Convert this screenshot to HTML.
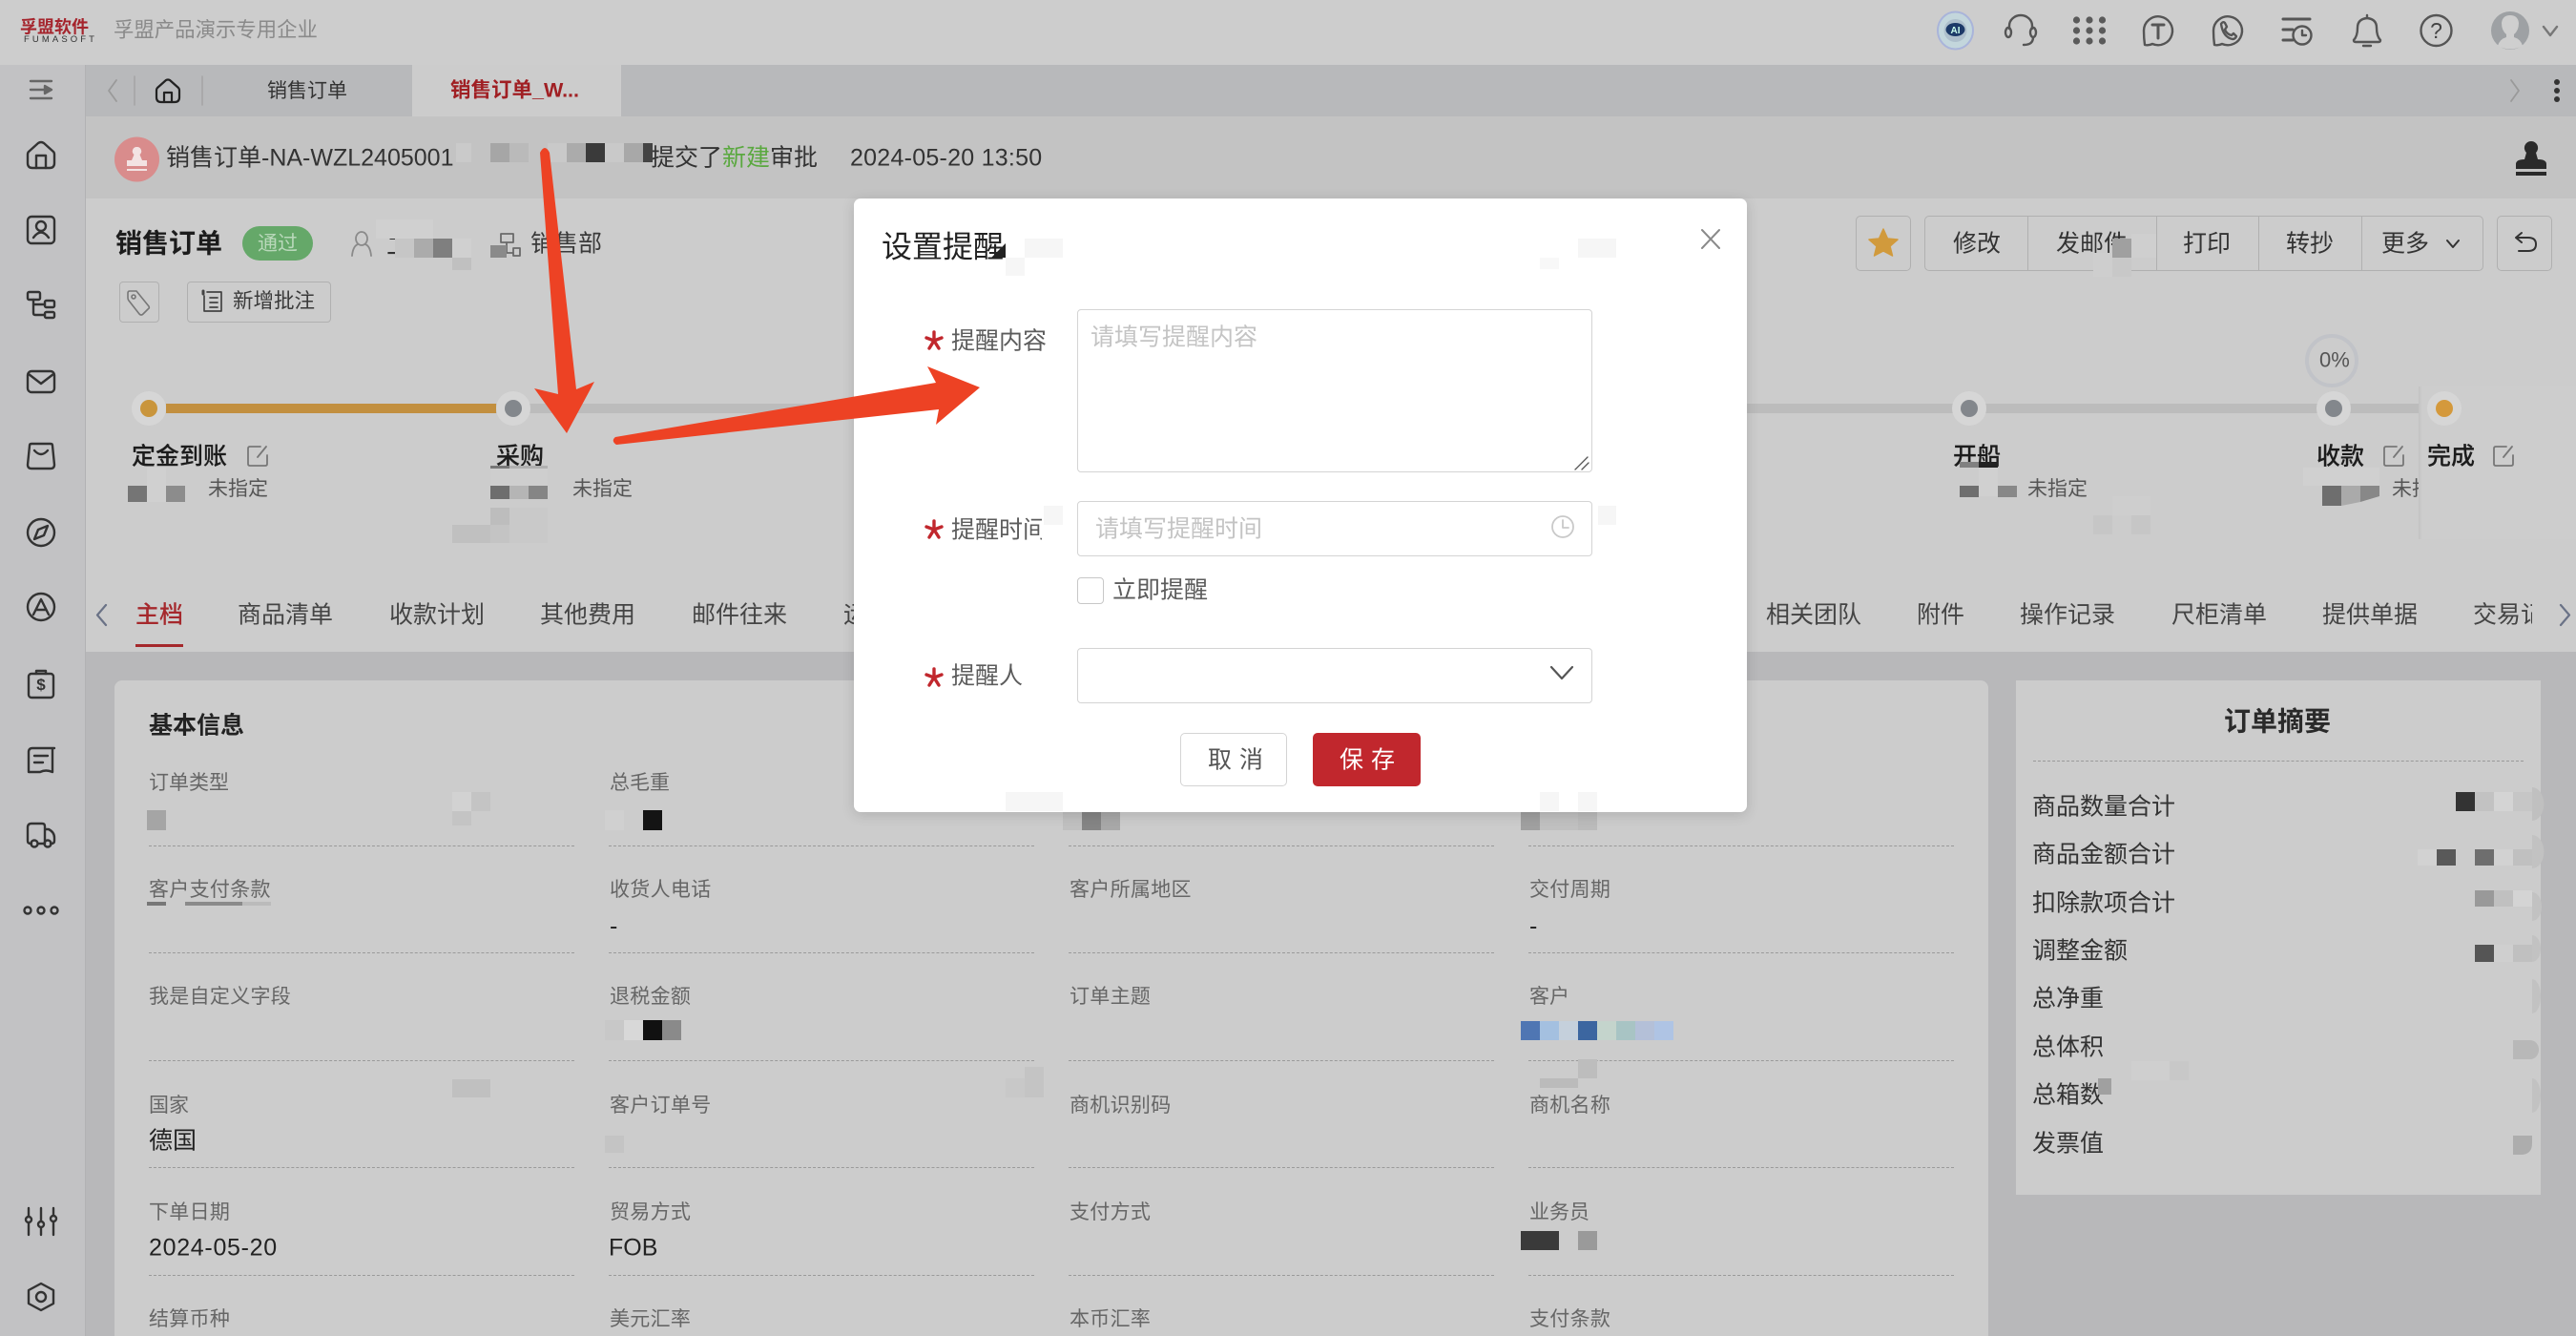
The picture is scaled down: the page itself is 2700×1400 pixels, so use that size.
<!DOCTYPE html>
<html lang="zh-CN"><head><meta charset="utf-8"><title>销售订单</title>
<style>
html,body{margin:0;padding:0;width:2700px;height:1400px;overflow:hidden;background:#b8b8ba;font-family:"Liberation Sans","Noto Sans CJK SC",sans-serif;}
#r{position:relative;width:2700px;height:1400px;overflow:hidden}
div.b{position:absolute;box-sizing:border-box}
.t{position:absolute;white-space:nowrap;transform:translateY(calc(-50% + 1.5px));line-height:1.2;font-size:25px;color:#333}
.l{font-size:21px;color:#666}
.v{font-size:25px;color:#222}
.u{font-size:21px;color:#555}
.s{font-weight:500;color:#1c1c1c;-webkit-text-stroke:.15px #1c1c1c}
.d{position:absolute;height:0;border-top:1px dashed #9a9a9a}
svg{position:absolute;left:0;top:0}
</style></head><body><div id="r">
<!-- backgrounds -->
<div class="b" style="left:0;top:0;width:2700px;height:68px;background:#cdcdcd"></div>
<div class="b" style="left:0;top:68px;width:90px;height:1332px;background:#c2c2c4;border-right:1px solid #b2b2b4"></div>
<div class="b" style="left:90px;top:68px;width:2610px;height:54px;background:#b8b9bb"></div>
<div class="b" style="left:432px;top:68px;width:219px;height:54px;background:#cccccc"></div>
<div class="b" style="left:90px;top:122px;width:2610px;height:86px;background:#c3c3c3"></div>
<div class="b" style="left:90px;top:208px;width:2610px;height:475px;background:#cccccc"></div>
<div class="b" style="left:2535px;top:405px;width:165px;height:160px;background:linear-gradient(90deg,#c2c2c2,#cdcdcd 4px)"></div>
<div class="b" style="left:120px;top:713px;width:1964px;height:687px;background:#cccccc;border-radius:8px 8px 0 0"></div>
<div class="b" style="left:2113px;top:713px;width:550px;height:539px;background:#cccccc"></div>

<!-- header -->
<span class="t" style="left:21px;top:28px;font-size:18px;font-weight:700;color:#a5252d">孚盟软件</span>
<span class="t" style="left:25px;top:40px;font-size:9.5px;letter-spacing:3.1px;color:#333">FUMASOFT</span>
<span class="t" style="left:119px;top:31px;font-size:21.4px;color:#8a8a8a">孚盟产品演示专用企业</span>

<!-- tab bar -->
<span class="t" style="left:280px;top:94px;font-size:21px;color:#333">销售订单</span>
<span class="t" style="left:472px;top:94px;font-size:21.5px;font-weight:700;color:#a01f23">销售订单_W...</span>

<!-- notice bar -->
<span class="t" style="left:174px;top:164px">销售订单-NA-WZL2405001</span>
<span class="t" style="left:682px;top:164px">提交了<span style="color:#5aa83f">新建</span>审批</span>
<span class="t" style="left:891px;top:164px;letter-spacing:.25px">2024-05-20 13:50</span>

<!-- title row -->
<span class="t" style="left:121px;top:254px;font-size:28px;font-weight:700;color:#1c1c1c">销售订单</span>
<div class="b" style="left:254px;top:237px;width:74px;height:36px;border-radius:18px;background:#65a869"></div>
<span class="t" style="left:270px;top:254px;font-size:21px;color:#b9d8ba">通过</span>
<span class="t" style="left:405px;top:257px;color:#333">二</span>
<span class="t" style="left:556px;top:254px;color:#3a3a3a">销售部</span>
<div class="b" style="left:125px;top:295px;width:42px;height:43px;border:1px solid #b0b0b0;border-radius:4px"></div>
<div class="b" style="left:196px;top:295px;width:151px;height:43px;border:1px solid #b0b0b0;border-radius:4px"></div>
<span class="t" style="left:244px;top:315px;font-size:21.5px;color:#3a3a3a">新增批注</span>

<!-- toolbar -->
<div class="b" style="left:1945px;top:226px;width:58px;height:58px;border:1px solid #b0b0b0;border-radius:5px"></div>
<div class="b" style="left:2017px;top:226px;width:586px;height:58px;border:1px solid #b0b0b0;border-radius:5px"></div>
<div class="b" style="left:2125px;top:226px;width:1px;height:58px;background:#b0b0b0"></div>
<div class="b" style="left:2260px;top:226px;width:1px;height:58px;background:#b0b0b0"></div>
<div class="b" style="left:2367px;top:226px;width:1px;height:58px;background:#b0b0b0"></div>
<div class="b" style="left:2475px;top:226px;width:1px;height:58px;background:#b0b0b0"></div>
<div class="b" style="left:2617px;top:226px;width:58px;height:58px;border:1px solid #b0b0b0;border-radius:5px"></div>
<span class="t" style="left:2047px;top:254px">修改</span>
<span class="t" style="left:2155px;top:254px">发邮件</span>
<span class="t" style="left:2288px;top:254px">打印</span>
<span class="t" style="left:2396px;top:254px">转抄</span>
<span class="t" style="left:2496px;top:254px">更多</span>

<!-- progress -->
<div class="b" style="left:520px;top:423px;width:2015px;height:10px;background:#bcbcbc"></div>
<div class="b" style="left:174px;top:423px;width:346px;height:10px;background:#c28f3f"></div>
<span class="t s" style="left:138px;top:477px">定金到账</span>
<span class="t u" style="left:218px;top:511px">未指定</span>
<span class="t s" style="left:520px;top:477px">采购</span>
<span class="t u" style="left:600px;top:511px">未指定</span>
<span class="t s" style="left:2047px;top:477px">开船</span>
<span class="t u" style="left:2125px;top:511px">未指定</span>
<span class="t s" style="left:2428px;top:477px">收款</span>
<div class="b" style="left:2507px;top:495px;width:28px;height:34px;overflow:hidden"><span class="t u" style="left:0;top:16px">未指定</span></div>
<span class="t s" style="left:2544px;top:477px">完成</span>
<div class="b" style="left:2416px;top:350px;width:56px;height:56px;border:4px solid #c1c3c8;border-radius:50%"></div>
<span class="t" style="left:2431px;top:376px;font-size:22px;color:#555">0%</span>

<!-- tabs -->
<span class="t" style="left:142px;top:643px;color:#a5282c;font-weight:500">主档</span>
<div class="b" style="left:142px;top:675px;width:50px;height:3px;background:#a5282c"></div>
<span class="t" style="left:249px;top:643px;color:#444">商品清单</span>
<span class="t" style="left:408px;top:643px;color:#444">收款计划</span>
<span class="t" style="left:566px;top:643px;color:#444">其他费用</span>
<span class="t" style="left:725px;top:643px;color:#444">邮件往来</span>
<span class="t" style="left:884px;top:643px;color:#444">运输信息</span>
<span class="t" style="left:1851px;top:643px;color:#444">相关团队</span>
<span class="t" style="left:2009px;top:643px;color:#444">附件</span>
<span class="t" style="left:2117px;top:643px;color:#444">操作记录</span>
<span class="t" style="left:2276px;top:643px;color:#444">尺柜清单</span>
<span class="t" style="left:2434px;top:643px;color:#444">提供单据</span>
<div class="b" style="left:2592px;top:625px;width:62px;height:40px;overflow:hidden"><span class="t" style="left:0;top:18px;color:#444">交易记录</span></div>

<!-- base info -->
<span class="t" style="left:156px;top:759px;font-weight:700;color:#222">基本信息</span>
<span class="t l" style="left:156px;top:819px">订单类型</span>
<span class="t l" style="left:639px;top:819px">总毛重</span>
<span class="t l" style="left:156px;top:931px;letter-spacing:.3px">客户支付条款</span>
<span class="t l" style="left:639px;top:931px;letter-spacing:.3px">收货人电话</span>
<span class="t l" style="left:1121px;top:931px;letter-spacing:.3px">客户所属地区</span>
<span class="t l" style="left:1603px;top:931px;letter-spacing:.3px">交付周期</span>
<span class="t v" style="left:639px;top:969px">-</span>
<span class="t v" style="left:1603px;top:969px">-</span>
<span class="t l" style="left:156px;top:1043px;letter-spacing:.3px">我是自定义字段</span>
<span class="t l" style="left:639px;top:1043px;letter-spacing:.3px">退税金额</span>
<span class="t l" style="left:1121px;top:1043px;letter-spacing:.3px">订单主题</span>
<span class="t l" style="left:1603px;top:1043px">客户</span>
<span class="t l" style="left:156px;top:1157px">国家</span>
<span class="t l" style="left:639px;top:1157px;letter-spacing:.3px">客户订单号</span>
<span class="t l" style="left:1121px;top:1157px;letter-spacing:.3px">商机识别码</span>
<span class="t l" style="left:1603px;top:1157px;letter-spacing:.3px">商机名称</span>
<span class="t v" style="left:156px;top:1194px">德国</span>
<span class="t l" style="left:156px;top:1269px;letter-spacing:.3px">下单日期</span>
<span class="t l" style="left:639px;top:1269px;letter-spacing:.3px">贸易方式</span>
<span class="t l" style="left:1121px;top:1269px;letter-spacing:.3px">支付方式</span>
<span class="t l" style="left:1603px;top:1269px">业务员</span>
<span class="t v" style="left:156px;top:1306px;letter-spacing:.7px">2024-05-20</span>
<span class="t v" style="left:638px;top:1306px;font-size:25px">FOB</span>
<span class="t l" style="left:156px;top:1381px;letter-spacing:.3px">结算币种</span>
<span class="t l" style="left:639px;top:1381px;letter-spacing:.3px">美元汇率</span>
<span class="t l" style="left:1121px;top:1381px;letter-spacing:.3px">本币汇率</span>
<span class="t l" style="left:1603px;top:1381px;letter-spacing:.3px">支付条款</span>
<!-- dashed rows -->
<div class="d" style="left:156px;top:886px;width:446px"></div><div class="d" style="left:638px;top:886px;width:446px"></div><div class="d" style="left:1120px;top:886px;width:446px"></div><div class="d" style="left:1602px;top:886px;width:446px"></div>
<div class="d" style="left:156px;top:998px;width:446px"></div><div class="d" style="left:638px;top:998px;width:446px"></div><div class="d" style="left:1120px;top:998px;width:446px"></div><div class="d" style="left:1602px;top:998px;width:446px"></div>
<div class="d" style="left:156px;top:1111px;width:446px"></div><div class="d" style="left:638px;top:1111px;width:446px"></div><div class="d" style="left:1120px;top:1111px;width:446px"></div><div class="d" style="left:1602px;top:1111px;width:446px"></div>
<div class="d" style="left:156px;top:1223px;width:446px"></div><div class="d" style="left:638px;top:1223px;width:446px"></div><div class="d" style="left:1120px;top:1223px;width:446px"></div><div class="d" style="left:1602px;top:1223px;width:446px"></div>
<div class="d" style="left:156px;top:1336px;width:446px"></div><div class="d" style="left:638px;top:1336px;width:446px"></div><div class="d" style="left:1120px;top:1336px;width:446px"></div><div class="d" style="left:1602px;top:1336px;width:446px"></div>

<!-- summary -->
<span class="t" style="left:2331px;top:755px;font-size:28px;font-weight:700;color:#2a2a2a">订单摘要</span>
<div class="d" style="left:2131px;top:797px;width:514px"></div>
<span class="t" style="left:2130px;top:844px">商品数量合计</span>
<span class="t" style="left:2130px;top:894px">商品金额合计</span>
<span class="t" style="left:2130px;top:945px">扣除款项合计</span>
<span class="t" style="left:2130px;top:995px">调整金额</span>
<span class="t" style="left:2130px;top:1045px">总净重</span>
<span class="t" style="left:2130px;top:1096px">总体积</span>
<span class="t" style="left:2130px;top:1146px">总箱数</span>
<span class="t" style="left:2130px;top:1197px">发票值</span>

<!-- icons and mosaic beneath modal -->
<svg width="2700" height="1400" viewBox="0 0 2700 1400" fill="none" stroke-linecap="round" stroke-linejoin="round">
<!-- sidebar -->
<g stroke="#333" stroke-width="2.4">
<g transform="translate(43,94)" stroke="#666"><path d="M-11,-9H11M-11,0H3M-11,9H11"/><path d="M4,-4L11,0L4,4Z" fill="#666"/></g>
<g transform="translate(43,162)"><path d="M-13,-3L-3,-12Q0,-14 3,-12L13,-3Q14,-2 14,0V9Q14,14 9,14H-9Q-14,14 -14,9V0Q-14,-2 -13,-3Z"/><path d="M-5,14V1H5V14"/></g>
<g transform="translate(43,241)"><rect x="-14" y="-14" width="28" height="28" rx="4"/><circle cx="0" cy="-4" r="5"/><path d="M-8,8Q0,-3 8,8"/></g>
<g transform="translate(43,319)"><rect x="-14" y="-13" width="13" height="8" rx="1.5"/><rect x="4" y="-4" width="10" height="7" rx="1.5"/><rect x="4" y="8" width="10" height="6" rx="1.5"/><path d="M-8,-5V9Q-8,11 -6,11H4M-8,0H4"/></g>
<g transform="translate(43,400)"><rect x="-14" y="-11" width="28" height="22" rx="4"/><path d="M-13,-8L0,2L13,-8"/></g>
<g transform="translate(43,478)"><path d="M-10,-13H10Q12,-13 12,-11L14,9Q14,13 10,13H-10Q-14,13 -14,9L-12,-11Q-12,-13 -10,-13Z"/><path d="M-7,-6Q0,2 7,-6"/></g>
<g transform="translate(43,558)"><circle r="14"/><path d="M7,-7L3,3L-7,7L-3,-3Z"/></g>
<g transform="translate(43,636)"><circle r="14"/><path d="M-8,8L0,-8L8,8M-5,3H5"/></g>
<g transform="translate(43,717)"><rect x="-13" y="-11" width="26" height="25" rx="3"/><path d="M-5,-11V-14H5V-11"/></g>
<text x="43" y="723" font-size="17" font-weight="700" fill="#333" stroke="none" text-anchor="middle" font-family="Liberation Sans">$</text>
<g transform="translate(43,796)"><path d="M14,-12H-9Q-13,-12 -13,-8V13H-1Q5,10 12,13V-12"/><path d="M-7,-4H7M-7,3H2"/></g>
<g transform="translate(43,874)"><path d="M-10,10H-11Q-14,10 -14,7V-7Q-14,-11 -10,-11H1Q4,-11 4,-8V10M-3,10H4M4,-5H8Q14,-2 14,4V7Q14,10 11,10H10"/><circle cx="-7" cy="10" r="3.5"/><circle cx="7" cy="10" r="3.5"/></g>
<g transform="translate(43,954)"><circle cx="-14" r="3.5"/><circle r="3.5"/><circle cx="14" r="3.5"/></g>
<g transform="translate(43,1280)"><path d="M-13,-14V14M0,-14V14M13,-14V14"/><circle cx="-13" cy="-2" r="3" fill="#c2c2c4"/><circle cx="0" cy="3" r="3" fill="#c2c2c4"/><circle cx="13" cy="-3" r="3" fill="#c2c2c4"/></g>
<g transform="translate(43,1359)"><path d="M0,-14L13,-7V7L0,14L-13,7V-7Z"/><circle r="5"/></g>
</g>
<!-- header icons -->
<ellipse cx="2049.5" cy="32" rx="18.5" ry="19.5" fill="#c3d6dc" stroke="#a9b4da" stroke-width="2"/><circle cx="2049.5" cy="32" r="12" fill="#aebfcc"/><ellipse cx="2049.5" cy="31" rx="10" ry="7" fill="#1d3a68"/>
<text x="2049.5" y="35" font-size="10" font-weight="700" fill="#cfe" text-anchor="middle" font-family="Liberation Sans">AI</text>
<g stroke="#555" stroke-width="2.4">
<g transform="translate(2118,32)"><path d="M-12,-2V-5A12,11 0 0 1 12,-5V-2M13,7Q13,15 3,15"/><ellipse cx="-13" cy="2" rx="3" ry="5"/><ellipse cx="13" cy="2" rx="3" ry="5"/></g>
<g transform="translate(2262,32)"><path d="M-15,0A15,15 0 1 1 -6,14Q-10,16 -14,15Q-15,8 -15,0Z"/><path d="M-6,-6H6M0,-6V8" stroke-width="3"/></g>
<g transform="translate(2335,32)"><path d="M-15,0A15,15 0 1 1 -6,14Q-10,16 -14,15Q-15,8 -15,0Z"/><path d="M-7,-7Q-5,-10 -3,-8L-1,-4L-3,-1Q-1,4 4,5L6,3L9,6Q8,9 5,9Q-5,7 -7,-7Z"/></g>
<g transform="translate(2407,32)"><path d="M-14,-12H14" stroke-width="3"/><path d="M-14,-1H-4M-14,10H-4" stroke-width="3"/><circle cx="6" cy="5" r="9.5"/><path d="M6,0V5H10"/></g>
<g transform="translate(2481,32)"><path d="M-14,10Q-10,6 -10,-3Q-10,-12 0,-13Q10,-12 10,-3Q10,6 14,10Q14,12 12,12H-12Q-14,12 -14,10Z"/><path d="M0,-16V-13M-4,16H4"/></g>
<circle cx="2553.5" cy="32" r="16"/>
<path d="M2666,28L2673,37L2680,28" stroke="#777"/>
</g>
<text x="2553.5" y="40" font-size="23" fill="#444" text-anchor="middle" font-family="Liberation Sans">?</text>
<g fill="#5a5a5a"><circle cx="2176.5" cy="21" r="3.6"/><circle cx="2190" cy="21" r="3.6"/><circle cx="2203.5" cy="21" r="3.6"/><circle cx="2176.5" cy="32" r="3.6"/><circle cx="2190" cy="32" r="3.6"/><circle cx="2203.5" cy="32" r="3.6"/><circle cx="2176.5" cy="43" r="3.6"/><circle cx="2190" cy="43" r="3.6"/><circle cx="2203.5" cy="43" r="3.6"/></g>
<circle cx="2631" cy="32" r="20" fill="#9ea1a4"/>
<path d="M2618,48Q2620,41 2627,39V36Q2622,32 2622,24Q2623,16 2631,16Q2639,16 2640,24Q2640,32 2635,36V39Q2642,41 2644,48Q2631,55 2618,48Z" fill="#cfcfcf"/>
<!-- tab bar icons -->
<path d="M122,84L114,95L122,106" stroke="#9a9a9a" stroke-width="1.8"/>
<path d="M141,80V110M212,80V110" stroke="#a4a4a4" stroke-width="1.5"/>
<g transform="translate(176,95)" stroke="#222" stroke-width="2.2"><path d="M-11,-3L-2,-11Q0,-12 2,-11L11,-3Q12,-2 12,0V7Q12,12 7,12H-7Q-12,12 -12,7V0Q-12,-2 -11,-3Z"/><path d="M-4,12V2H4V12"/></g>
<path d="M2632,84L2640,95L2632,106" stroke="#9a9a9a" stroke-width="1.8"/>
<g fill="#333"><circle cx="2680" cy="86" r="3"/><circle cx="2680" cy="95" r="3"/><circle cx="2680" cy="104" r="3"/></g>
<!-- notice icons -->
<ellipse cx="143.5" cy="167" rx="23.5" ry="23.5" fill="#d98c8c"/>
<path d="M143.5,154a4.5,4.5 0 0 1 3,8L149,168H154V174H133V168H138L140.5,162A4.5,4.5 0 0 1 143.5,154ZM133,177H154V179H133Z" fill="#f3e3e3"/>
<path d="M2653,148a7,7 0 0 1 5,12L2660,167Q2669,167 2669,172V177H2637V172Q2637,167 2646,167L2648,160A7,7 0 0 1 2653,148ZM2637,180H2669V184H2637Z" fill="#2a2a2a"/>
<!-- title row icons -->
<g stroke="#8a8a8a" stroke-width="1.8"><ellipse cx="379" cy="250" rx="6" ry="7"/><path d="M369,268Q370,258 375,256M389,268Q388,258 383,256"/></g>
<g stroke="#6a6a6a" stroke-width="1.8"><rect x="525" y="245" width="13" height="9"/><path d="M531,254V265H538"/><rect x="538" y="260" width="7" height="8"/></g>
<g transform="translate(146,316)" stroke="#777" stroke-width="1.6"><path d="M-12,-9Q-12,-11 -10,-11L-3,-11L10,5Q11,7 9,8L4,13Q2,15 0,13L-11,-1Q-12,-2 -12,-4Z"/><circle cx="-6" cy="-5" r="2"/></g>
<g transform="translate(223,316)" stroke="#444" stroke-width="1.7"><path d="M-6,-10H9V10H-9V-6M-3,-4H5M-3,1H5M-3,6H5"/><path d="M-10,-11V-8" stroke-width="3"/></g>
<!-- toolbar icons -->
<path d="M1974,240L1978.5,250L1989,251L1981,258L1983.5,268L1974,263L1964.5,268L1967,258L1959,251L1969.5,250Z" fill="#d19a3c" stroke="#d19a3c" stroke-width="1.5"/>
<path d="M2565,252L2571,259L2577,252" stroke="#333" stroke-width="2"/>
<g stroke="#333" stroke-width="2"><path d="M2643,244L2637,249L2643,254M2637,249H2650Q2658,249 2658,256Q2658,263 2650,263H2640"/></g>
<!-- progress nodes -->
<g fill="#d6d6d6"><circle cx="156" cy="428" r="18"/><circle cx="538" cy="428" r="18"/><circle cx="2064" cy="428" r="18"/><circle cx="2446" cy="428" r="18"/><circle cx="2562" cy="428" r="18"/></g>
<circle cx="156" cy="428" r="9" fill="#c9953c"/><circle cx="538" cy="428" r="9" fill="#83878c"/><circle cx="2064" cy="428" r="9" fill="#83878c"/><circle cx="2446" cy="428" r="9" fill="#83878c"/><circle cx="2562" cy="428" r="9" fill="#d4993c"/>
<!-- edit icons -->
<g stroke="#777" stroke-width="1.8">
<g transform="translate(270,478)"><path d="M3,-10H-8Q-10,-10 -10,-8V8Q-10,10 -8,10H8Q10,10 10,8V-1M0,1L9,-10"/></g>
<g transform="translate(2509,478)"><path d="M3,-10H-8Q-10,-10 -10,-8V8Q-10,10 -8,10H8Q10,10 10,8V-1M0,1L9,-10"/></g>
<g transform="translate(2624,478)"><path d="M3,-10H-8Q-10,-10 -10,-8V8Q-10,10 -8,10H8Q10,10 10,8V-1M0,1L9,-10"/></g>
</g>
<!-- tab chevrons -->
<path d="M111,634L102,644.5L111,655" stroke="#6a7286" stroke-width="2.2"/>
<path d="M2684,634L2693,644.5L2684,655" stroke="#6a7286" stroke-width="2.2"/>
<!-- mosaic -->
<g stroke="none">
<!-- notice -->
<rect x="478" y="150" width="16" height="20" fill="#cacaca"/><rect x="514" y="150" width="20" height="20" fill="#a6a6a6"/><rect x="534" y="150" width="20" height="20" fill="#bababa"/><rect x="574" y="150" width="20" height="20" fill="#c9c9c9"/><rect x="594" y="150" width="20" height="20" fill="#ababab"/><rect x="614" y="150" width="20" height="20" fill="#3a3a3a"/><rect x="634" y="150" width="20" height="20" fill="#c9c9c9"/><rect x="654" y="150" width="20" height="20" fill="#a8a8a8"/><rect x="674" y="150" width="10" height="20" fill="#444"/>
<!-- title -->
<rect x="394" y="230" width="60" height="20" fill="#d0d0d0"/><rect x="414" y="250" width="20" height="20" fill="#c6c6c6"/><rect x="434" y="250" width="20" height="20" fill="#ababab"/><rect x="454" y="250" width="20" height="20" fill="#7f7f7f"/><rect x="474" y="250" width="20" height="20" fill="#d0d0d0"/><rect x="474" y="270" width="20" height="13" fill="#c0c0c0"/><rect x="514" y="257" width="17" height="13" fill="#8a8a8a"/>
<!-- toolbar -->
<rect x="2194" y="265" width="20" height="25" fill="#cecece"/><rect x="2214" y="250" width="20" height="20" fill="#a0a0a0"/><rect x="2214" y="270" width="20" height="20" fill="#c8c8c8"/><rect x="2234" y="245" width="26" height="25" fill="#cfcfcf"/>
<!-- steps -->
<rect x="134" y="509" width="20" height="17" fill="#757575"/><rect x="154" y="490" width="20" height="36" fill="#d0d0d0"/><rect x="174" y="509" width="20" height="17" fill="#8c8c8c"/>
<rect x="514" y="488" width="20" height="3" fill="#777"/><rect x="534" y="488" width="40" height="3" fill="#b0b0b0"/><rect x="514" y="491" width="60" height="18" fill="#cecece"/><rect x="514" y="509" width="20" height="14" fill="#6e6e6e"/><rect x="534" y="509" width="20" height="14" fill="#b5b5b5"/><rect x="554" y="509" width="20" height="14" fill="#858585"/>
<rect x="474" y="550" width="40" height="19" fill="#c0c0c0"/><rect x="514" y="532" width="20" height="18" fill="#bdbdbd"/><rect x="514" y="550" width="20" height="19" fill="#c4c4c4"/><rect x="534" y="532" width="40" height="37" fill="#c9c9c9"/>
<rect x="2054" y="484" width="20" height="6" fill="#808080"/><rect x="2074" y="484" width="20" height="6" fill="#222"/><rect x="2054" y="509" width="20" height="12" fill="#6e6e6e"/><rect x="2094" y="509" width="20" height="12" fill="#888"/><rect x="2074" y="490" width="20" height="30" fill="#d0d0d0"/>
<rect x="2194" y="540" width="20" height="20" fill="#c6c6c6"/><rect x="2234" y="540" width="20" height="20" fill="#c6c6c6"/><rect x="2214" y="520" width="40" height="20" fill="#cecece"/>
<rect x="2414" y="490" width="80" height="19" fill="#d0d0d0"/><rect x="2434" y="509" width="20" height="21" fill="#6e6e6e"/><path d="M2454,509H2474V526L2454,530Z" fill="#aaa"/><path d="M2474,509H2494V520L2474,526Z" fill="#888"/>
<!-- fields -->
<rect x="154" y="849" width="20" height="21" fill="#a5a5a5"/><rect x="634" y="849" width="20" height="21" fill="#d0d0d0"/><rect x="674" y="849" width="20" height="21" fill="#141414"/>
<rect x="474" y="830" width="20" height="20" fill="#d2d2d2"/><rect x="494" y="830" width="20" height="20" fill="#c4c4c4"/><rect x="474" y="850" width="20" height="15" fill="#c4c4c4"/>
<rect x="154" y="945" width="20" height="4" fill="#777"/><rect x="194" y="945" width="60" height="4" fill="#8a8a8a"/><rect x="254" y="945" width="30" height="4" fill="#bbb"/>
<rect x="634" y="1069" width="20" height="21" fill="#c8c8c8"/><rect x="654" y="1069" width="20" height="21" fill="#d8d8d8"/><rect x="674" y="1069" width="20" height="21" fill="#111"/><rect x="694" y="1069" width="20" height="21" fill="#8a8a8a"/>
<rect x="474" y="1131" width="40" height="19" fill="#c0c0c0"/><rect x="634" y="1190" width="20" height="18" fill="#c4c4c4"/>
<rect x="1114" y="850" width="20" height="20" fill="#c0c0c0"/><rect x="1134" y="850" width="20" height="20" fill="#858585"/><rect x="1154" y="850" width="20" height="20" fill="#a8a8a8"/>
<rect x="1594" y="850" width="20" height="20" fill="#a0a0a0"/><rect x="1614" y="850" width="40" height="20" fill="#c0c0c0"/><rect x="1654" y="850" width="20" height="20" fill="#bbb"/>
<rect x="1594" y="1070" width="20" height="20" fill="#4f76b3"/><rect x="1614" y="1070" width="20" height="20" fill="#a4c0e0"/><rect x="1634" y="1070" width="20" height="20" fill="#c5d0dc"/><rect x="1654" y="1070" width="20" height="20" fill="#3c66a0"/><rect x="1674" y="1070" width="20" height="20" fill="#c4d4cc"/><rect x="1694" y="1070" width="20" height="20" fill="#a8c4c4"/><rect x="1714" y="1070" width="20" height="20" fill="#b4c0d8"/><rect x="1734" y="1070" width="20" height="20" fill="#afc4e4"/>
<rect x="1594" y="1290" width="40" height="20" fill="#3a3a3a"/><rect x="1654" y="1290" width="20" height="20" fill="#9a9a9a"/>
<rect x="1074" y="1118" width="20" height="32" fill="#c4c4c4"/><rect x="1054" y="1130" width="20" height="20" fill="#c8c8c8"/>
<rect x="1654" y="1110" width="20" height="20" fill="#bdbdbd"/><rect x="1614" y="1130" width="40" height="10" fill="#bbb"/>
<!-- summary -->
<rect x="2574" y="830" width="20" height="20" fill="#333"/><rect x="2594" y="830" width="20" height="20" fill="#c2c2c2"/><rect x="2614" y="830" width="20" height="20" fill="#d4d4d4"/><rect x="2634" y="830" width="20" height="20" fill="#c6c6c6"/><path d="M2654,825A12,17 0 0 1 2654,860Z" fill="#c0c0c0"/>
<rect x="2534" y="890" width="20" height="17" fill="#d2d2d2"/><rect x="2554" y="890" width="20" height="17" fill="#595959"/><rect x="2594" y="890" width="20" height="17" fill="#6e6e6e"/><rect x="2614" y="890" width="20" height="17" fill="#d2d2d2"/><rect x="2634" y="890" width="20" height="17" fill="#c0c0c0"/><path d="M2654,875A12,17 0 0 1 2654,910Z" fill="#c2c2c2"/>
<rect x="2594" y="933" width="20" height="17" fill="#999"/><rect x="2614" y="933" width="20" height="17" fill="#c0c0c0"/><rect x="2634" y="933" width="20" height="17" fill="#d4d4d4"/><path d="M2654,935A10,15 0 0 1 2654,965Z" fill="#c2c2c2"/>
<rect x="2594" y="990" width="20" height="18" fill="#555"/><rect x="2614" y="990" width="20" height="18" fill="#cfcfcf"/><rect x="2634" y="990" width="20" height="18" fill="#c0c0c0"/><path d="M2654,980A9,14 0 0 1 2654,1008Z" fill="#c2c2c2"/>
<path d="M2654,1026A9,18 0 0 1 2654,1062Z" fill="#c2c2c2"/>
<path d="M2634,1090H2652A9,10 0 0 1 2652,1110H2634Z" fill="#b8b8b8"/>
<path d="M2654,1130A9,18 0 0 1 2654,1166Z" fill="#c2c2c2"/>
<path d="M2634,1190H2654V1198Q2654,1210 2642,1210H2634Z" fill="#adadad"/>
<rect x="2199" y="1130" width="14" height="17" fill="#a0a0a0"/><rect x="2234" y="1112" width="40" height="20" fill="#cfcfcf"/><rect x="2274" y="1112" width="20" height="20" fill="#c8c8c8"/>
</g>
</svg>

<!-- modal -->
<div class="b" style="left:895px;top:208px;width:936px;height:643px;background:#fff;border-radius:7px;box-shadow:0 3px 14px rgba(0,0,0,.14)"></div>
<span class="t" style="left:924px;top:256.5px;font-size:32px;color:#222">设置提醒</span>
<svg width="2700" height="1400" viewBox="0 0 2700 1400" fill="none" stroke-linecap="round">
<path d="M1784,241L1802,260M1802,241L1784,260" stroke="#8a8a8a" stroke-width="2"/>
</svg>
<span class="t" style="left:997px;top:356px;color:#5c5c5c">提醒内容</span>
<div class="b" style="left:1129px;top:324px;width:540px;height:171px;border:1px solid #d4d4d4;border-radius:4px"></div>
<span class="t" style="left:1143px;top:352px;color:#c4c4c4">请填写提醒内容</span>
<span class="t" style="left:997px;top:554px;color:#5c5c5c">提醒时间</span>
<div class="b" style="left:1092px;top:535px;width:9px;height:40px;background:#fff"></div>
<div class="b" style="left:1129px;top:525px;width:540px;height:58px;border:1px solid #d4d4d4;border-radius:4px"></div>
<span class="t" style="left:1148px;top:553px;color:#c4c4c4">请填写提醒时间</span>
<div class="b" style="left:1129px;top:605px;width:28px;height:28px;border:1px solid #c8c8c8;border-radius:4px"></div>
<span class="t" style="left:1166px;top:617px;color:#5c5c5c">立即提醒</span>
<span class="t" style="left:997px;top:707px;color:#5c5c5c">提醒人</span>
<div class="b" style="left:1129px;top:679px;width:540px;height:58px;border:1px solid #d4d4d4;border-radius:4px"></div>
<div class="b" style="left:1237px;top:768px;width:112px;height:56px;border:1px solid #d4d4d4;border-radius:5px"></div>
<span class="t" style="left:1266px;top:795px;color:#555;letter-spacing:8px">取消</span>
<div class="b" style="left:1376px;top:768px;width:113px;height:56px;background:#c1272d;border-radius:5px"></div>
<span class="t" style="left:1404px;top:795px;color:#fff;letter-spacing:8px">保存</span>

<!-- modal overlay: stars, icons, mosaic, arrows -->
<svg width="2700" height="1400" viewBox="0 0 2700 1400" fill="none" stroke-linecap="round" stroke-linejoin="round">
<g stroke="#c1272d" stroke-width="3.4">
<g transform="translate(979,357)"><path d="M0,-9V0M-8,-3L0,0L8,-3M-5,8L0,0L5,8"/></g>
<g transform="translate(979,555)"><path d="M0,-9V0M-8,-3L0,0L8,-3M-5,8L0,0L5,8"/></g>
<g transform="translate(979,710)"><path d="M0,-9V0M-8,-3L0,0L8,-3M-5,8L0,0L5,8"/></g>
</g>
<path d="M1651,492L1664,479M1658,492L1665,485" stroke="#555" stroke-width="1.3"/>
<g stroke="#c9c9c9" stroke-width="1.8"><circle cx="1638" cy="552" r="11"/><path d="M1638,545V553H1644"/></g>
<path d="M1626,699L1637,711L1648,699" stroke="#555" stroke-width="2.2"/>
<g stroke="none">
<path d="M1039,270L1054,255V270Z" fill="#222"/>
<rect x="1074" y="250" width="40" height="20" fill="#f6f6f6"/><rect x="1054" y="270" width="20" height="19" fill="#f6f6f6"/>
<rect x="1654" y="250" width="40" height="20" fill="#f6f6f6"/><rect x="1614" y="270" width="20" height="12" fill="#f8f8f8"/>
<rect x="1094" y="530" width="20" height="20" fill="#f6f6f6"/><rect x="1675" y="530" width="19" height="20" fill="#f6f6f6"/>
<rect x="1054" y="830" width="60" height="20" fill="#f6f6f6"/><rect x="1614" y="830" width="20" height="20" fill="#f6f6f6"/><rect x="1654" y="830" width="20" height="20" fill="#f6f6f6"/>
</g>
<!-- arrows -->
<path d="M566,160Q571,150 576,160L604,408L623,400L594,454L560,407L585,413Z" fill="#ed4224"/>
<path d="M645,458L981,401L972,384L1027,406L981,445L984,429L646,466Q640,462 645,458Z" fill="#ed4224"/>
</svg>
</div></body></html>
